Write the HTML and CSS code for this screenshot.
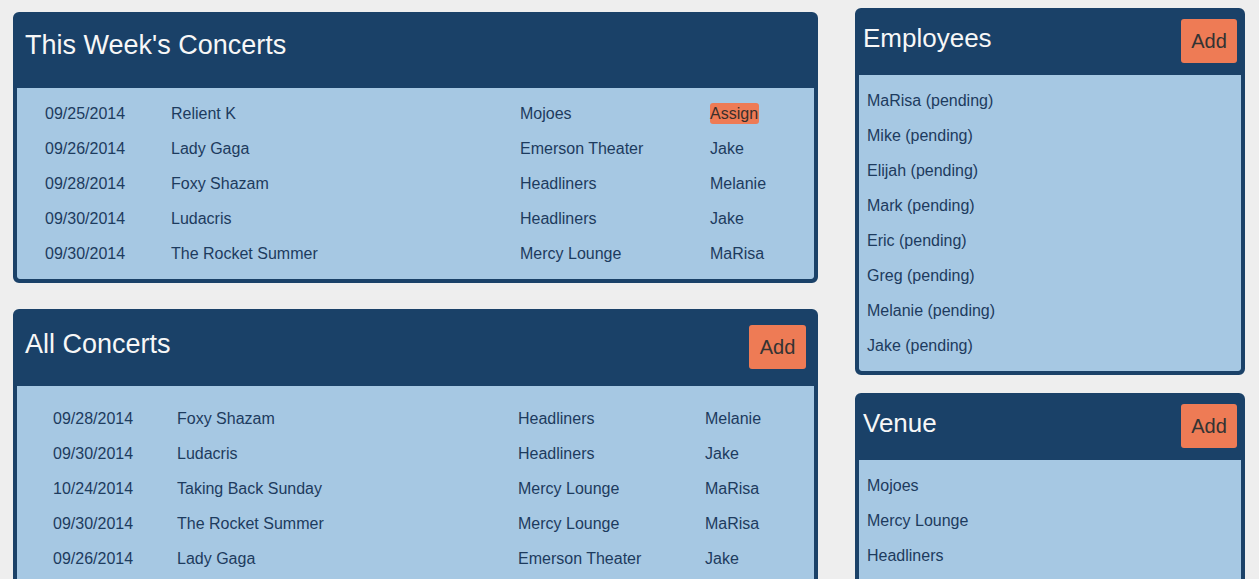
FILE: index.html
```html
<!DOCTYPE html>
<html>
<head>
<meta charset="utf-8">
<link rel="stylesheet" href="styles.css">
</head>
<body>
<div class="page">
  <div class="main-col">
    <section class="panel panel-week">
      <header class="panel-head head-week">
        <h2 class="panel-title">This Week's Concerts</h2>
      </header>
      <div class="panel-body body-week">
        <div class="grid grid-week">
          <span>09/25/2014</span><span>Relient K</span><span>Mojoes</span><span><span class="assign">Assign</span></span>
          <span>09/26/2014</span><span>Lady Gaga</span><span>Emerson Theater</span><span>Jake</span>
          <span>09/28/2014</span><span>Foxy Shazam</span><span>Headliners</span><span>Melanie</span>
          <span>09/30/2014</span><span>Ludacris</span><span>Headliners</span><span>Jake</span>
          <span>09/30/2014</span><span>The Rocket Summer</span><span>Mercy Lounge</span><span>MaRisa</span>
        </div>
      </div>
    </section>
    <section class="panel panel-all">
      <header class="panel-head head-all">
        <h2 class="panel-title title-all">All Concerts</h2>
        <button class="add-btn">Add</button>
      </header>
      <div class="panel-body body-all">
        <div class="grid grid-all">
          <span>09/28/2014</span><span>Foxy Shazam</span><span>Headliners</span><span>Melanie</span>
          <span>09/30/2014</span><span>Ludacris</span><span>Headliners</span><span>Jake</span>
          <span>10/24/2014</span><span>Taking Back Sunday</span><span>Mercy Lounge</span><span>MaRisa</span>
          <span>09/30/2014</span><span>The Rocket Summer</span><span>Mercy Lounge</span><span>MaRisa</span>
          <span>09/26/2014</span><span>Lady Gaga</span><span>Emerson Theater</span><span>Jake</span>
        </div>
      </div>
    </section>
  </div>
  <div class="side-col">
    <section class="panel panel-side">
      <header class="panel-head head-side">
        <h2 class="panel-title title-side">Employees</h2>
        <button class="add-btn">Add</button>
      </header>
      <div class="panel-body body-side">
        <ul class="list">
          <li>MaRisa (pending)</li>
          <li>Mike (pending)</li>
          <li>Elijah (pending)</li>
          <li>Mark (pending)</li>
          <li>Eric (pending)</li>
          <li>Greg (pending)</li>
          <li>Melanie (pending)</li>
          <li>Jake (pending)</li>
        </ul>
      </div>
    </section>
    <section class="panel panel-side panel-venue">
      <header class="panel-head head-side">
        <h2 class="panel-title title-side">Venue</h2>
        <button class="add-btn">Add</button>
      </header>
      <div class="panel-body body-side">
        <ul class="list">
          <li>Mojoes</li>
          <li>Mercy Lounge</li>
          <li>Headliners</li>
        </ul>
      </div>
    </section>
  </div>
</div>
</body>
</html>
```

FILE: styles.css
```css
html, body {
  margin: 0;
  padding: 0;
  background: #eeeeee;
  font-family: "Liberation Sans", Arial, Helvetica, sans-serif;
  color: #1d3b5e;
  overflow: hidden;
}

.page {
  display: flex;
  align-items: flex-start;
  gap: 37px;
  padding: 0 14px 0 13px;
  height: 579px;
}

.main-col {
  width: 805px;
  display: flex;
  flex-direction: column;
  gap: 26px;
  padding-top: 12px;
}

.side-col {
  width: 390px;
  display: flex;
  flex-direction: column;
  gap: 18px;
  padding-top: 8px;
}

.panel {
  background: #1a4168;
  border: 4px solid #1a4168;
  border-radius: 6px;
  overflow: hidden;
}

.panel-head {
  display: flex;
  justify-content: space-between;
  align-items: flex-start;
  box-sizing: border-box;
}

.head-week {
  height: 72px;
  padding: 14px 8px 0 8px;
}

.head-all {
  height: 73px;
  padding: 12px 8px 0 8px;
}

.head-side {
  height: 63px;
  padding: 7px 4px 0 4px;
}

.panel-title {
  margin: 0;
  font-size: 27px;
  line-height: 31px;
  font-weight: normal;
  color: #f7f7f7;
}

.title-all {
  margin-top: 4px;
}

.title-side {
  font-size: 26px;
  margin-top: 4px;
}

.add-btn {
  font-family: "Liberation Sans", Arial, Helvetica, sans-serif;
  font-size: 20px;
  line-height: 24px;
  height: 44px;
  width: 57px;
  padding: 0;
  border: none;
  border-radius: 3px;
  background: #ee7b55;
  color: #333333;
}

.head-side .add-btn {
  width: 56px;
}

.panel-body {
  background: #a6c8e3;
  border-radius: 0 0 3px 3px;
  font-size: 16px;
}

.body-week {
  padding: 8px 0 8px 28px;
}

.body-all {
  padding: 15px 0 8px 36px;
}

.body-side {
  padding: 8px 8px 8px 8px;
}

.grid {
  display: grid;
  grid-auto-rows: 35px;
  align-items: center;
}

.grid-week {
  grid-template-columns: 126px 349px 190px 1fr;
}

.grid-all {
  grid-template-columns: 124px 341px 187px 1fr;
}

.assign {
  background: #ee7b55;
  color: #3a2f2b;
  border-radius: 3px;
  padding: 2px 1px 2px 0;
}

.list {
  list-style: none;
  margin: 0;
  padding: 0;
}

.list li {
  height: 35px;
  line-height: 35px;
}
```
